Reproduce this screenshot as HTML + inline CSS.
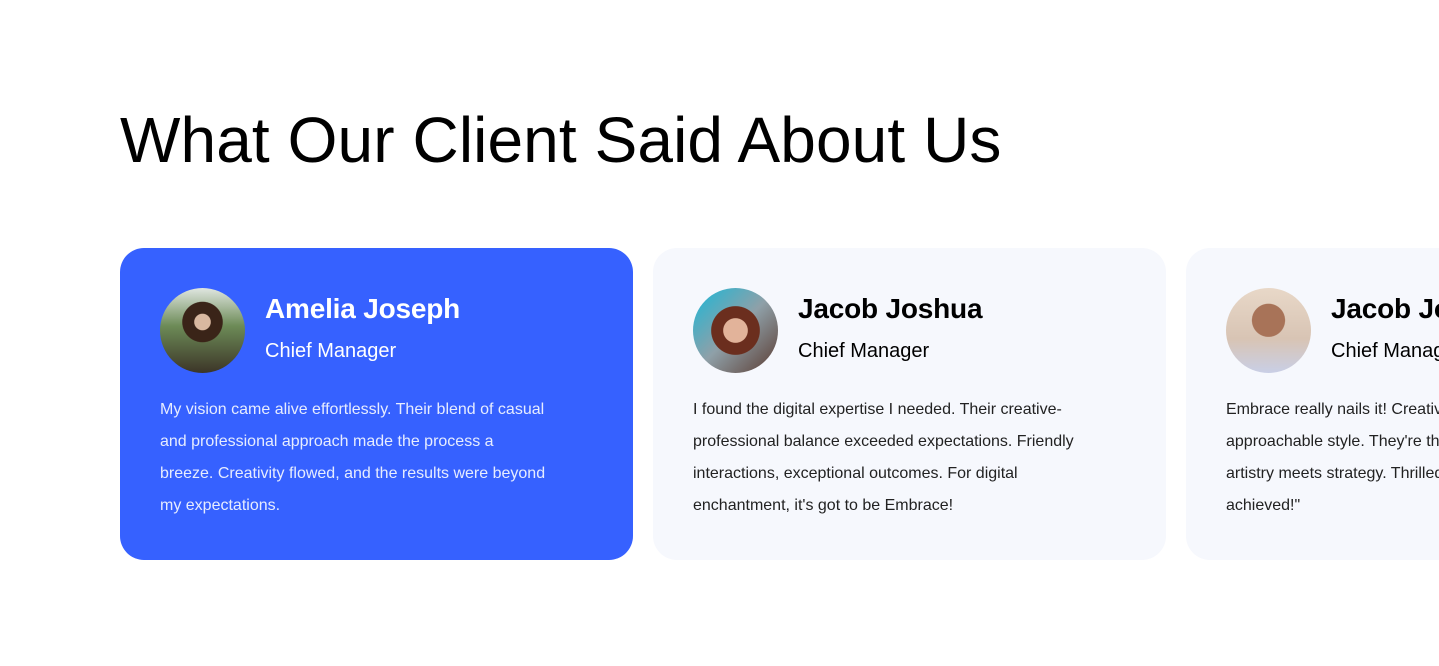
<!DOCTYPE html>
<html><head><meta charset="utf-8"><style>
html,body{margin:0;padding:0;background:#fff;width:1439px;height:666px;overflow:hidden;font-family:"Liberation Sans",sans-serif;}
h1{position:absolute;left:120px;top:100px;margin:0;font-size:64px;font-weight:400;color:#000;letter-spacing:0.1px;line-height:80px;white-space:nowrap;}
.card{position:absolute;top:248px;width:513px;height:312px;border-radius:24px;background:#f6f8fd;box-sizing:border-box;overflow:hidden;}
.card.active{background:#3661ff;color:#fff;}
.av{position:absolute;left:40px;top:40px;width:85px;height:85px;border-radius:50%;}
.name{position:absolute;left:145px;top:45px;font-size:28px;font-weight:700;white-space:nowrap;letter-spacing:-0.2px;}
.role{position:absolute;left:145px;top:92px;font-size:20px;white-space:nowrap;}
.txt{position:absolute;left:40px;top:146px;width:480px;font-size:16px;line-height:32px;color:#222;white-space:nowrap;}
.active .txt{color:#e6ecff;}
</style></head><body>
<h1>What Our Client Said About Us</h1>
<div class="card active" style="left:120px">
<div class="av" style="background:radial-gradient(circle at 50% 40%,#d9b8a0 0 12%,#3a2418 13% 30%,transparent 31%),linear-gradient(180deg,#dfe6e0 0%,#6c8a56 45%,#3c3528 100%)"></div>
<div class="name">Amelia Joseph</div><div class="role">Chief Manager</div>
<div class="txt">My vision came alive effortlessly. Their blend of casual<br>and professional approach made the process a<br>breeze. Creativity flowed, and the results were beyond<br>my expectations.</div>
</div>
<div class="card" style="left:653px">
<div class="av" style="background:radial-gradient(circle at 50% 50%,#e2b39a 0 20%,#6b2e1e 21% 40%,transparent 41%),linear-gradient(135deg,#19b8d8 0%,#8fa0a8 50%,#5a3a30 100%)"></div>
<div class="name">Jacob Joshua</div><div class="role">Chief Manager</div>
<div class="txt">I found the digital expertise I needed. Their creative-<br>professional balance exceeded expectations. Friendly<br>interactions, exceptional outcomes. For digital<br>enchantment, it's got to be Embrace!</div>
</div>
<div class="card" style="left:1186px">
<div class="av" style="background:radial-gradient(circle at 50% 38%,#a87358 0 24%,transparent 25%),linear-gradient(180deg,#e8d8c8 0%,#d8c4b4 60%,#c9cfe6 100%)"></div>
<div class="name">Jacob Joshua</div><div class="role">Chief Manager</div>
<div class="txt">Embrace really nails it! Creativity meets an<br>approachable style. They're the place where<br>artistry meets strategy. Thrilled with what we<br>achieved!"</div>
</div>
</body></html>
